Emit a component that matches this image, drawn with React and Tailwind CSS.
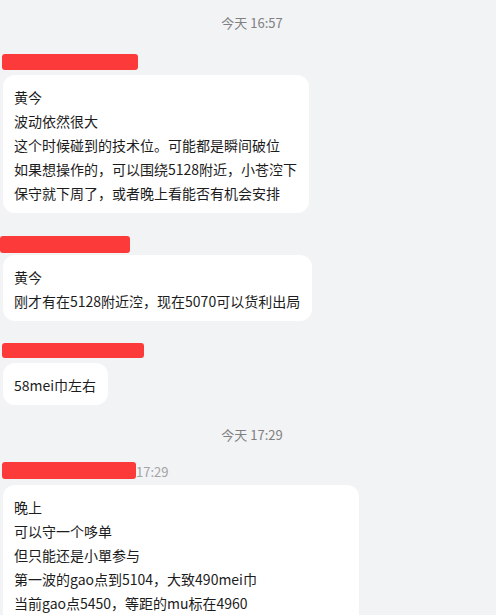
import React from 'react';

const font = { fontFamily: '"Noto Sans CJK SC", "Noto Sans", sans-serif' };

const messages = [
  {
    bar: 'ml-[2px] w-[136px] h-[16px] mt-[22px]',
    bubble: 'mt-[5px]',
    lines: [
      '黄今',
      '波动依然很大',
      '这个时候碰到的技术位。可能都是瞬间破位',
      '如果想操作的，可以围绕5128附近，小苍涳下',
      '保守就下周了，或者晚上看能否有机会安排',
    ],
  },
  {
    bar: 'ml-0 w-[130px] h-[17px] mt-[23px]',
    bubble: 'mt-[2px]',
    lines: ['黄今', '刚才有在5128附近涳，现在5070可以货利出局'],
  },
  {
    bar: 'ml-[2px] w-[142px] h-[15px] mt-[22px]',
    bubble: 'mt-[5px]',
    lines: ['58mei巾左右'],
  },
];

const Bubble = ({ lines, className = '' }) => (
  <div className={`shrink-0 ml-[3px] bg-white rounded-[12px] pl-[11px] pr-[12px] pt-[10px] pb-[8px] text-[14px] leading-[24px] text-[#1c1c1c] ${className}`}>
    {lines.map((line, i) => (
      <div key={i} className="whitespace-nowrap">{line}</div>
    ))}
  </div>
);

const Stamp = ({ children, className = '' }) => (
  <div className={`shrink-0 text-center text-[13px] leading-[18px] text-[#808080] pl-[8px] ${className}`}>{children}</div>
);

const App = () => {
  return (
    <div className="w-full h-[615px] overflow-hidden bg-[#f2f3f5] flex flex-col items-start" style={font}>
      <Stamp className="w-full pt-[14px]">今天 16:57</Stamp>
      {messages.map((msg, i) => (
        <React.Fragment key={i}>
          <div className={`shrink-0 bg-[#fd3a3a] rounded-[3px] ${msg.bar}`} />
          <Bubble lines={msg.lines} className={msg.bubble} />
        </React.Fragment>
      ))}
      <Stamp className="w-full mt-[21px]">今天 17:29</Stamp>
      <div className="shrink-0 flex items-start mt-[18px]">
        <div className="ml-[2px] w-[134px] h-[17px] bg-[#fd3a3a] rounded-[3px]" />
        <span className="text-[13px] leading-[18px] text-[#a3a3a3] mt-[1px]">17:29</span>
      </div>
      <Bubble
        className="mt-[4px] w-[356px] pb-[20px]"
        lines={[
          '晚上',
          '可以守一个哆单',
          '但只能还是小單参与',
          '第一波的gao点到5104，大致490mei巾',
          '当前gao点5450，等距的mu标在4960',
        ]}
      />
    </div>
  );
};

export default App;
